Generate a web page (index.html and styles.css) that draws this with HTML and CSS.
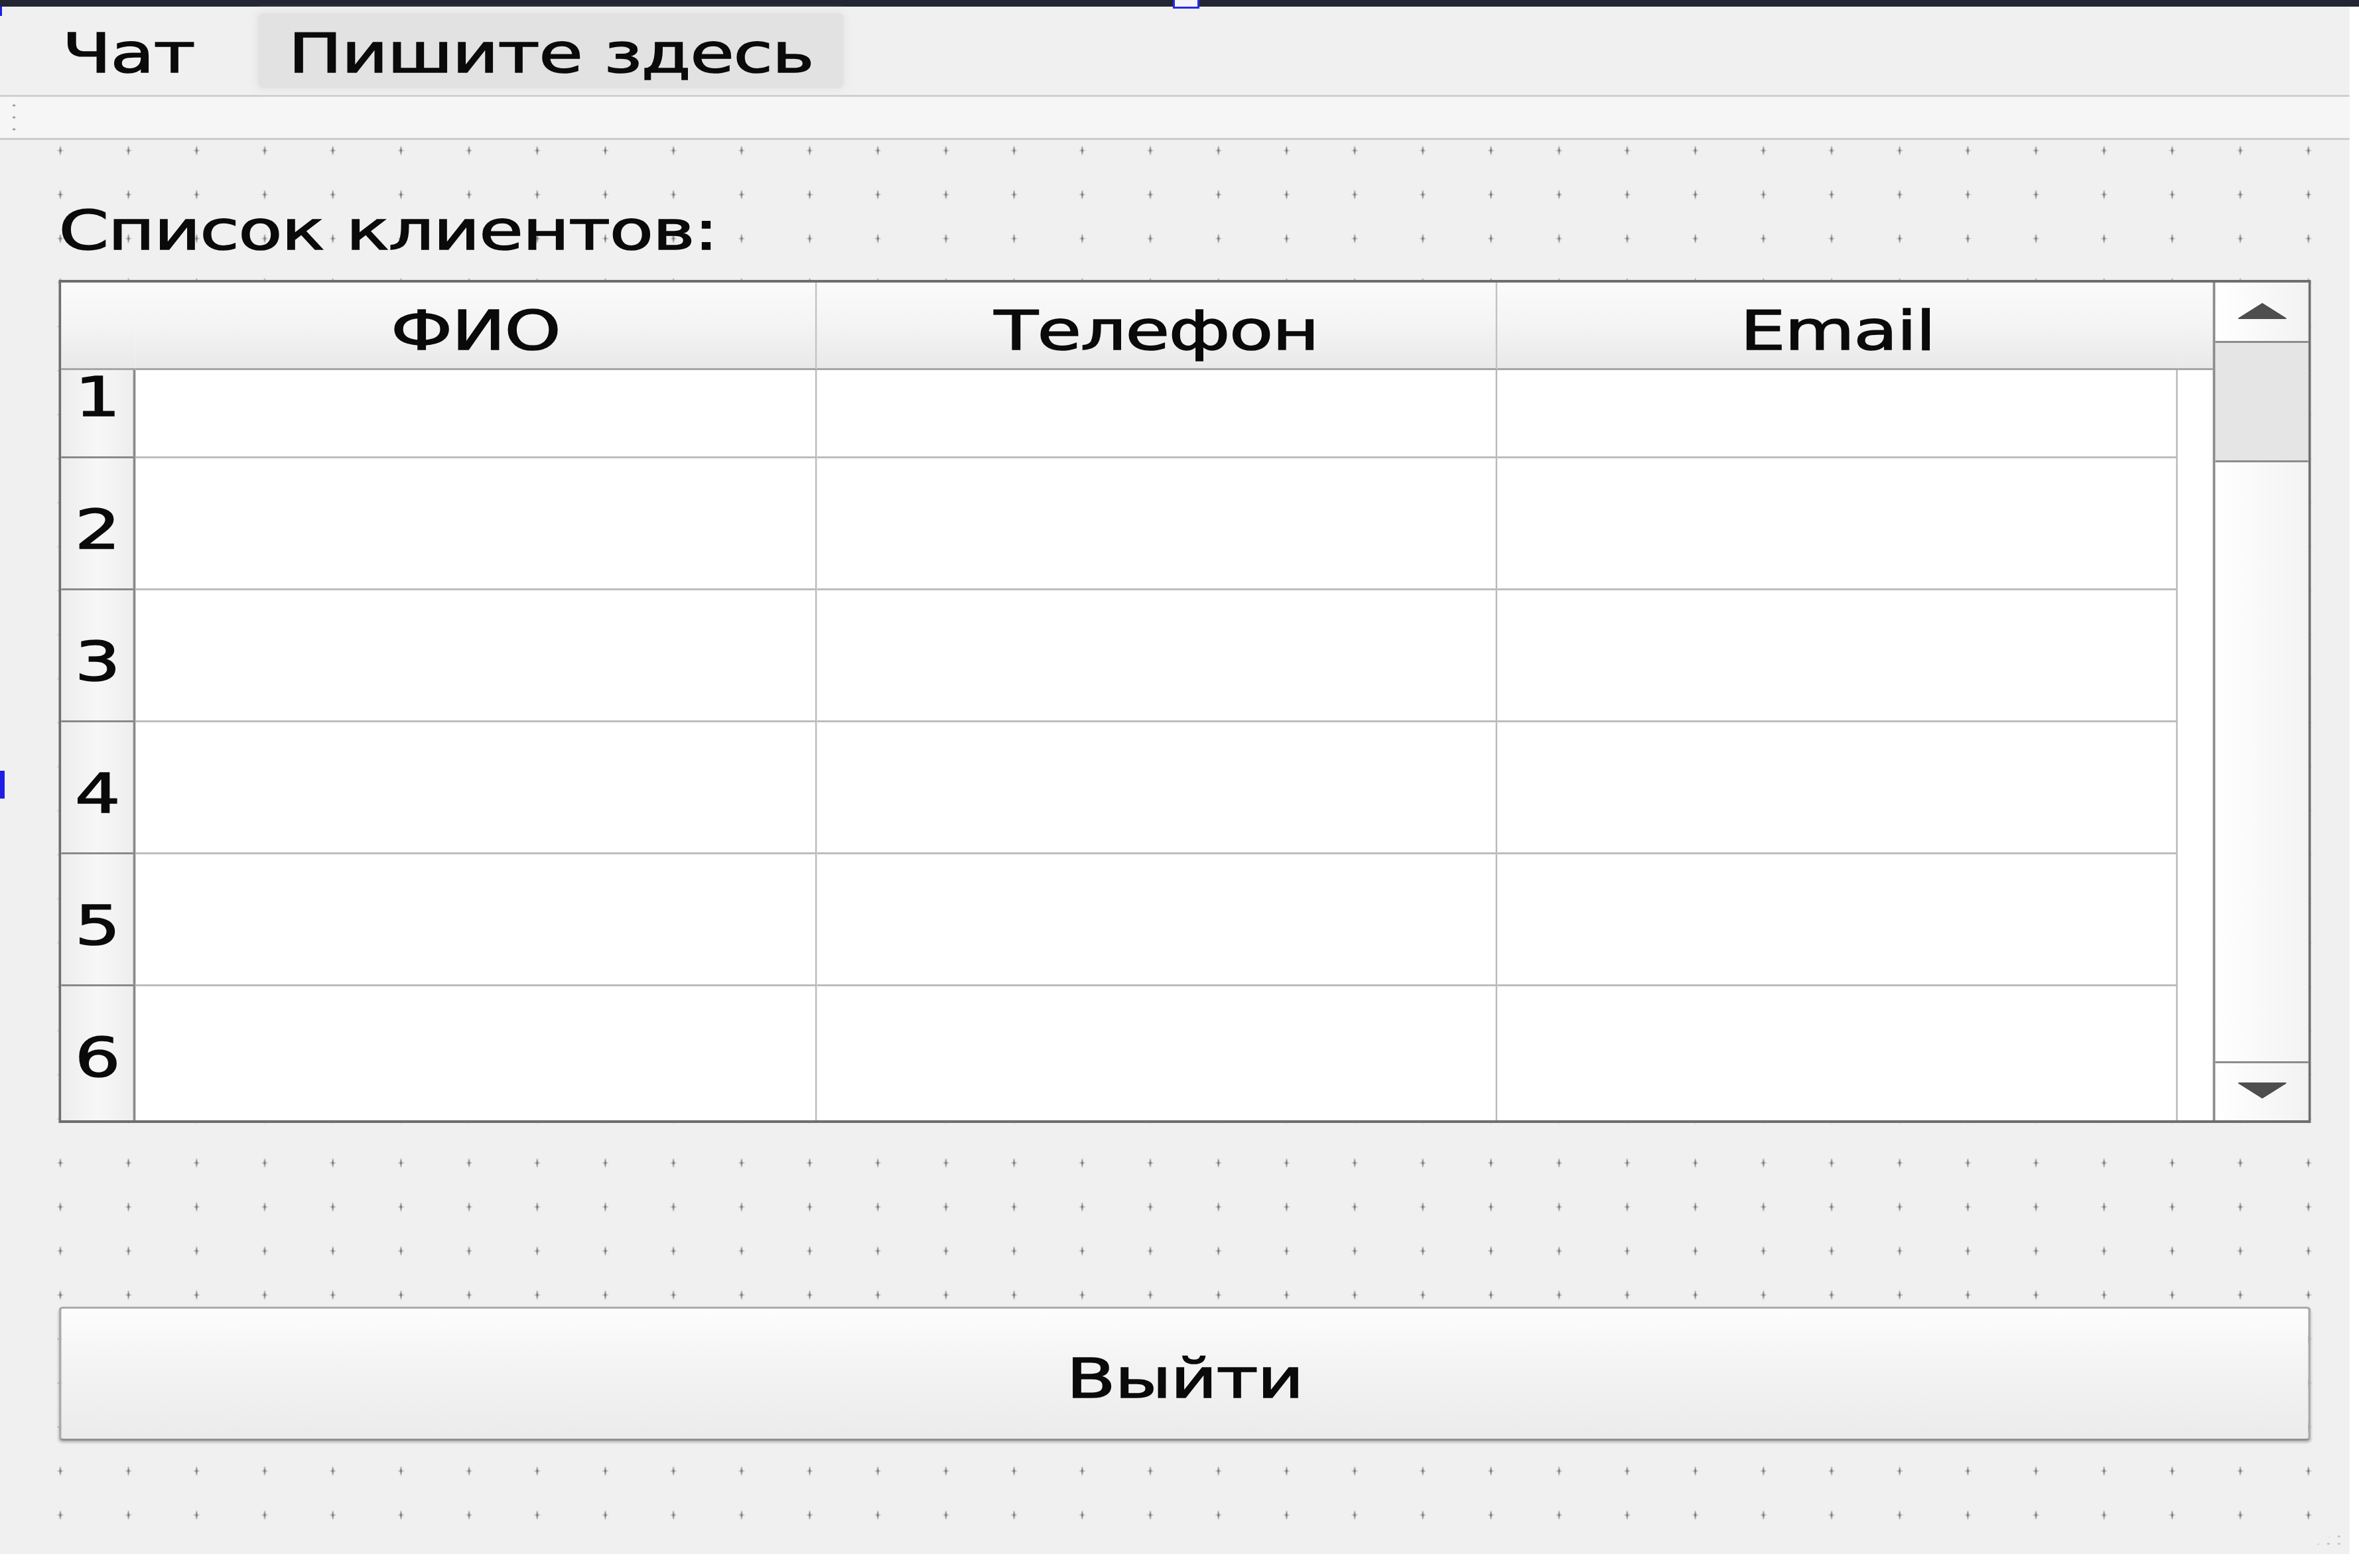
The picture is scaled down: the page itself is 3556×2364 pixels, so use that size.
FILE: index.html
```html
<!DOCTYPE html>
<html lang="ru">
<head>
<meta charset="utf-8">
<title>Список клиентов</title>
<link rel="stylesheet" href="styles.css">
</head>
<body>
<div class="titlebar"></div>
<div class="app">
  <div class="menubar">
    <span class="menu-item">Чат</span>
    <span class="menu-item menu-item--active">Пишите здесь</span>
  </div>
  <div class="toolbar"><span class="toolbar-grip"></span></div>
  <div class="form">
    <div class="caption">Список клиентов:</div>
    <div class="table">
      <div class="grid">
        <div class="hcell"></div>
        <div class="hcell hcell--sep">ФИО</div>
        <div class="hcell hcell--sep">Телефон</div>
        <div class="hcell">Email</div>
        <div class="hcell"></div>

        <div class="vcell vcell--first">1</div>
        <div class="cell"></div><div class="cell"></div><div class="cell"></div><div class="gap"></div>

        <div class="vcell">2</div>
        <div class="cell"></div><div class="cell"></div><div class="cell"></div><div class="gap"></div>

        <div class="vcell">3</div>
        <div class="cell"></div><div class="cell"></div><div class="cell"></div><div class="gap"></div>

        <div class="vcell">4</div>
        <div class="cell"></div><div class="cell"></div><div class="cell"></div><div class="gap"></div>

        <div class="vcell">5</div>
        <div class="cell"></div><div class="cell"></div><div class="cell"></div><div class="gap"></div>

        <div class="vcell vcell--last">6</div>
        <div class="cell cell--last"></div><div class="cell cell--last"></div><div class="cell cell--last"></div><div class="gap"></div>
      </div>
      <div class="scrollbar">
        <div class="sb-btn sb-up">
          <svg class="sb-arrow" viewBox="0 0 57 24" width="57" height="24"><polygon points="28.5,1 55,23 2,23" fill="#4e4e4e" stroke="#4e4e4e" stroke-width="2" stroke-linejoin="round"/></svg>
        </div>
        <div class="sb-thumb"></div>
        <div class="sb-track"></div>
        <div class="sb-btn sb-down">
          <svg class="sb-arrow" viewBox="0 0 57 24" width="57" height="24"><polygon points="2,1 55,1 28.5,23" fill="#4e4e4e" stroke="#4e4e4e" stroke-width="2" stroke-linejoin="round"/></svg>
        </div>
      </div>
    </div>
    <button class="exit">Выйти</button>
    <div class="size-grip"></div>
  </div>
</div>
<span class="handle handle--top"></span>
<span class="handle handle--left"></span>
<span class="handle handle--corner"></span>
</body>
</html>
```
FILE: styles.css
```css
html, body {
  margin: 0;
  padding: 0;
}
body {
  position: relative;
  width: 3556px;
  height: 2364px;
  overflow: hidden;
  background: #ffffff;
  font-family: "DejaVu Sans", "Liberation Sans", sans-serif;
  font-size: 82px;
  line-height: 82px;
  color: #0a0a0a;
  -webkit-text-stroke: 1.6px #0a0a0a;
  letter-spacing: -1px;
}

.titlebar {
  height: 10px;
  background: #222733;
}

.app {
  width: 2683px;
  height: 2333px;
  display: flex;
  flex-direction: column;
  transform: scaleX(1.32);
  transform-origin: 0 0;
  background: #f0f0f0;
}

/* menu bar */
.menubar {
  box-sizing: border-box;
  height: 136px;
  padding: 10px 0 10px 37px;
  display: flex;
  gap: 39px;
  background: #f0f0f0;
  border-bottom: 3px solid #d0d0d0;
}
.menu-item {
  padding: 20px 34px 0;
  white-space: nowrap;
}
.menu-item--active {
  background: #e2e2e2;
  border-radius: 6px;
  box-shadow: 0 0 10px 2px #e4e4e4;
}

/* toolbar */
.toolbar {
  box-sizing: border-box;
  height: 65px;
  background: #f6f6f6;
  border-bottom: 3px solid #cbcbcb;
  display: flex;
  align-items: center;
  padding-left: 6px;
}
.toolbar-grip {
  width: 26px;
  height: 54px;
  background-image: radial-gradient(circle at center, #9a9a9a 0 1.2px, transparent 2px);
  background-size: 20px 18px;
  background-position: 0 0;
}

/* form */
.form {
  flex: 1;
  display: flex;
  flex-direction: column;
  padding: 0 44px 0 67px;
  background-color: #f0f0f0;
  background-image:
    radial-gradient(ellipse 1.5px 8px at 50% 50%, #707070 0, rgba(112,112,112,0.6) 55%, rgba(112,112,112,0) 100%),
    radial-gradient(ellipse 4.5px 1.5px at 50% 50%, #7c7c7c 0, rgba(124,124,124,0) 100%);
  background-size: 77.8px 66.37px;
  background-position: 30px -17.2px;
}

.caption {
  margin-top: 96px;
  margin-bottom: 33px;
  white-space: nowrap;
}

/* table */
.table {
  box-sizing: border-box;
  height: 1271px;
  display: flex;
  border-style: solid;
  border-color: #6e6e6e;
  border-width: 4px 3px;
  background: #ffffff;
}
.grid {
  flex: 1;
  display: grid;
  grid-template-columns: 85px 778px 777px 777px 1fr;
  grid-template-rows: 132px 133px repeat(4, 199px) 1fr;
}
.hcell {
  box-sizing: border-box;
  background: linear-gradient(#fbfbfb, #f4f4f4 50%, #e9e9e9);
  border-bottom: 3px solid #a6a6a6;
  padding-top: 32px;
  text-align: center;
  white-space: nowrap;
}
.hcell--sep {
  border-right: 2px solid #c2c2c2;
}
.cell {
  box-sizing: border-box;
  border-right: 2px solid #bababa;
  border-bottom: 3px solid #bdbdbd;
  background: #ffffff;
}
.cell--last {
  border-bottom: none;
}
.gap {
  background: #ffffff;
}
.vcell {
  box-sizing: border-box;
  background: linear-gradient(to right, #ededed, #f7f7f7 50%, #eeeeee);
  border-right: 3px solid #8a8a8a;
  border-bottom: 3px solid #8a8a8a;
  padding-top: 67px;
  text-align: center;
}
.vcell--first {
  padding-top: 0;
}
.vcell--last {
  border-bottom: none;
}

/* scrollbar */
.scrollbar {
  box-sizing: border-box;
  width: 109px;
  display: flex;
  flex-direction: column;
  border-left: 3px solid #8c8c8c;
}
.sb-btn {
  box-sizing: border-box;
  display: flex;
  justify-content: center;
  background: linear-gradient(to right, #ffffff, #f2f2f2);
}
.sb-up {
  height: 91px;
  padding-top: 31px;
  border-bottom: 3px solid #8c8c8c;
}
.sb-down {
  height: 89px;
  padding-top: 29px;
  border-top: 3px solid #8c8c8c;
}
.sb-arrow {
  display: block;
}
.sb-thumb {
  box-sizing: border-box;
  height: 180px;
  background: #e5e5e5;
  border-bottom: 3px solid #8c8c8c;
}
.sb-track {
  flex: 1;
  background: linear-gradient(to right, #ffffff, #f3f3f3);
}

/* exit button */
.exit {
  box-sizing: border-box;
  margin: 277px 0 0;
  height: 202px;
  width: 100%;
  padding: 16px 0 0;
  font: inherit;
  letter-spacing: inherit;
  color: inherit;
  border: 3px solid #ababab;
  border-bottom-color: #8f8f8f;
  border-radius: 5px;
  background: linear-gradient(#fdfdfd, #f3f3f3 45%, #ebebeb);
  box-shadow: 0 3px 3px rgba(0, 0, 0, 0.22);
}

.size-grip {
  align-self: flex-end;
  margin: auto -41px 10px 0;
  width: 39px;
  height: 33px;
  background-image: radial-gradient(circle at center, #c4c4c4 0 1.2px, transparent 2px);
  background-size: 12px 11px;
  clip-path: polygon(100% 0, 100% 100%, 0 100%);
}

/* designer selection handles */
.handle {
  position: absolute;
  background: #1e1ee6;
}
.handle--top {
  left: 1768px;
  top: 0;
  width: 34px;
  height: 10px;
  background: #f4f4ff;
  border: 3px solid #2a2ae8;
  border-top: none;
}
.handle--left {
  left: 0;
  top: 1162px;
  width: 7px;
  height: 42px;
}
.handle--corner {
  left: 0;
  top: 10px;
  width: 3px;
  height: 14px;
}
```
